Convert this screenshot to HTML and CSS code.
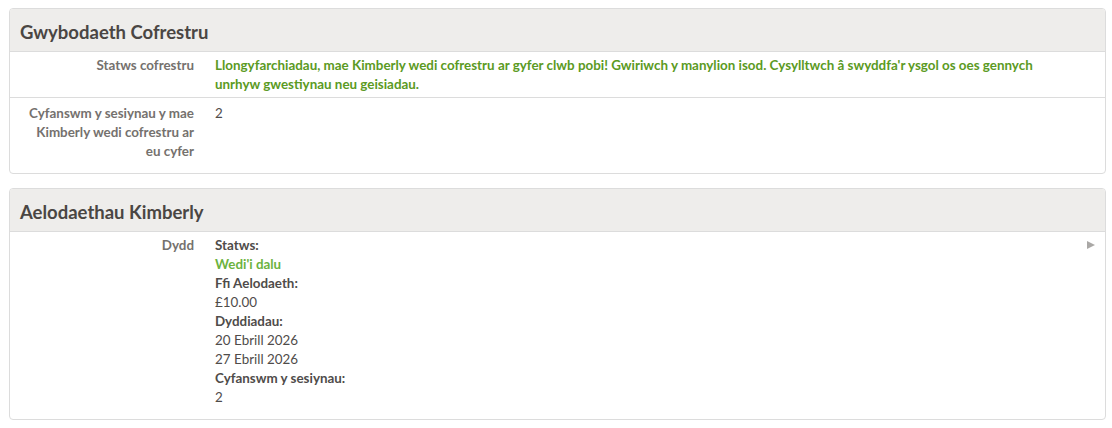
FILE: index.html
```html
<!DOCTYPE html>
<html lang="cy">
<head>
  <meta charset="UTF-8">
  <title>Gwybodaeth Cofrestru</title>
  <link rel="stylesheet" href="styles.css">
</head>
<body>

  <div class="panel">
    <div class="panel-head">
      <h2>Gwybodaeth Cofrestru</h2>
    </div>
    <div class="row">
      <div class="label">Statws cofrestru</div>
      <div class="value success">Llongyfarchiadau, mae Kimberly wedi cofrestru ar gyfer clwb pobi! Gwiriwch y manylion isod. Cysylltwch â swyddfa'r ysgol os oes gennych unrhyw gwestiynau neu geisiadau.</div>
    </div>
    <div class="row tall">
      <div class="label">Cyfanswm y sesiynau y mae Kimberly wedi cofrestru ar eu cyfer</div>
      <div class="value">2</div>
    </div>
  </div>

  <div class="panel">
    <div class="panel-head">
      <h2>Aelodaethau Kimberly</h2>
    </div>
    <div class="row">
      <div class="label">Dydd</div>
      <div class="value">
        <div class="key">Statws:</div>
        <div class="paid">Wedi'i dalu</div>
        <div class="key">Ffi Aelodaeth:</div>
        <div>£10.00</div>
        <div class="key">Dyddiadau:</div>
        <div>20 Ebrill 2026</div>
        <div>27 Ebrill 2026</div>
        <div class="key">Cyfanswm y sesiynau:</div>
        <div>2</div>
      </div>
      <span class="arrow"></span>
    </div>
  </div>

</body>
</html>
```

FILE: styles.css
```css
body {
  font-family: 'Lato', sans-serif;
  font-size: 13.4px;
  line-height: 19px;
  color: #4f4c4a;
  background: #fff;
  margin: 0;
  padding: 8px 6px 8px 9px;
}

.panel {
  border: 1px solid #dcdcdc;
  border-radius: 4px;
  margin-bottom: 14px;
  overflow: hidden;
}

.panel-head {
  background-color: #eeedeb;
  border-bottom: 1px solid #dcdcdc;
  padding: 13px 10px 8px;
}

.panel-head h2 {
  margin: 0;
  font-size: 18.5px;
  line-height: 21px;
  font-weight: 700;
  color: #4a4643;
}

.row {
  display: flex;
  position: relative;
  padding: 4px 10px 3px 0;
  border-bottom: 1px solid #dcdcdc;
}

.row:last-child {
  border-bottom: none;
  padding-bottom: 12px;
}

.row.tall {
  padding-top: 6px;
}

.label {
  width: 172px;
  flex: none;
  padding-left: 12px;
  padding-right: 21px;
  text-align: right;
  font-weight: 700;
  color: #75716e;
}

.value {
  flex: 1;
  padding-right: 40px;
}

.success {
  color: #5b9a23;
  font-weight: 700;
}

.key {
  font-weight: 700;
}

.paid {
  color: #6cb33f;
  font-weight: 700;
}

.arrow {
  position: absolute;
  right: 10px;
  top: 9px;
  width: 0;
  height: 0;
  border-top: 4.5px solid transparent;
  border-bottom: 4.5px solid transparent;
  border-left: 8px solid #aaa8a6;
}
```
